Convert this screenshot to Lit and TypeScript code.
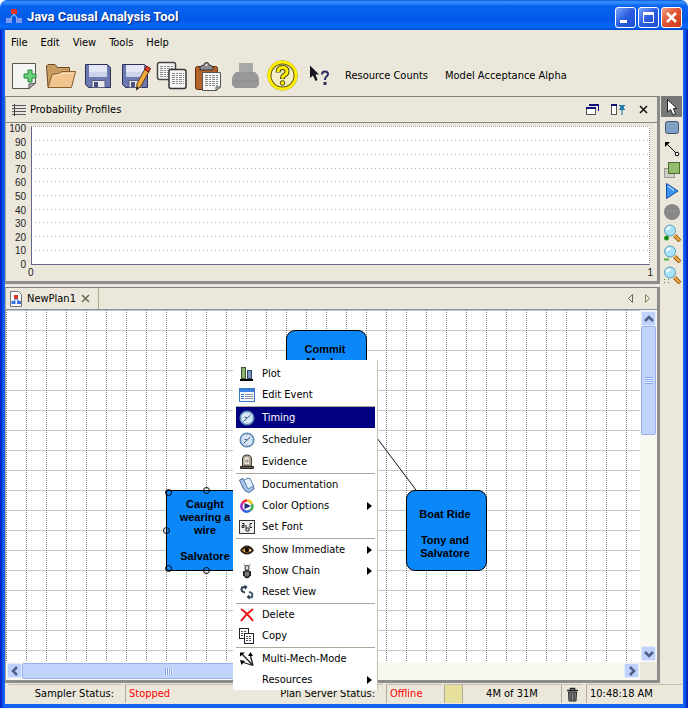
import { LitElement, html, svg, css, nothing, SVGTemplateResult } from "lit";
import { customElement } from "lit/decorators.js";
import { classMap } from "lit/directives/class-map.js";
import { styleMap } from "lit/directives/style-map.js";

const icon = (w: number, h: number, body: SVGTemplateResult) =>
  html`<svg width=${w} height=${h} viewBox="0 0 ${w} ${h}" aria-hidden="true">${body}</svg>`;

const floppy = svg`
  <path d="M3.5 4.5 H25.5 L28.5 7.5 V27.5 H6.5 L3.5 24.5Z" fill="#6c78b0" stroke="#2c3258"/>
  <path d="M7 5 H25 V17 H7Z" fill="#e4e8f6"/>
  <path d="M7 12 H25 V17 H7Z" fill="#cdd3ea"/>
  <path d="M10 20.500 H23 V27.500 H10Z" fill="#e8e8ec" stroke="#5a5f80"/>
  <rect x="12" y="22" width="4" height="5" fill="#49527f"/>`;

const textLines = (x: number, y: number, w: number, n: number) =>
  Array.from({ length: n }, (_, i) => svg`<path d="M${x} ${y + i * 2 + 0.5} h${w}" stroke="#8a8a8a" stroke-dasharray="3 1 2 1"/>`);

const tools: { label: string; body: SVGTemplateResult }[] = [
  { label: "New", body: svg`
    <path d="M4.500 3.500 H27.500 V23 L21 28.500 H4.500Z" fill="#f4f4f2" stroke="#555"/>
    <path d="M27.500 23 L21 28.500 V24Z" fill="#bbb" stroke="#555"/>
    <path d="M20 10 h4 v4 h4 v4 h-4 v4 h-4 v-4 h-4 v-4 h4Z" fill="#6cd07a" stroke="#1f8a35"/>` },
  { label: "Open", body: svg`
    <path d="M3 27 L1.500 6 L3 4.500 H10 L12.500 7.500 H24.500 V13" fill="#c99c62" stroke="#6e4a22"/>
    <path d="M3 27.500 L7 14.500 L14 13.500 L17 11.500 H30.500 L26.500 27.500Z" fill="#f2c58e" stroke="#8a5f30"/>
    <path d="M8 16 L17.500 13.500 H29" fill="none" stroke="#fbe4c2"/>` },
  { label: "Save", body: floppy },
  { label: "Save As", body: svg`${floppy}
    <path d="M27 7 L31 9.500 L22 26 L17.500 30 L18 23.500Z" fill="#f0a840" stroke="#5a3c10"/>
    <path d="M27.500 6 L31.500 8.500 L29.500 12 L25.500 9.500Z" fill="#d84030" stroke="#7a1c10"/>
    <path d="M17.500 30 L18 26.500 L20 28Z" fill="#222"/>` },
  { label: "Copy", body: svg`
    <rect x="1.500" y="2.500" width="18" height="17" rx="2" fill="#f6f6f4" stroke="#444" stroke-width="1.500"/>
    ${textLines(4, 6, 13, 6)}
    <rect x="13" y="9.500" width="17" height="19" rx="2" fill="#f6f6f4" stroke="#333" stroke-width="1.500"/>
    ${textLines(16, 13, 12, 6)}` },
  { label: "Paste", body: svg`
    <rect x="2.500" y="6.500" width="22" height="23" rx="2" fill="#b4642a" stroke="#5c2c0c"/>
    <path d="M7 10 V7 Q9 5 11 5 Q11 2.500 13.500 2.500 Q16 2.500 16 5 Q18 5 20 7 V10Z" fill="#8c8c90" stroke="#333"/>
    <circle cx="13.500" cy="5" r="1" fill="#eee"/>
    <path d="M9.500 12.500 H27.500 V27 L23 30.500 H9.500Z" fill="#f8f8f6" stroke="#555"/>
    ${textLines(12, 15, 13, 6)}
    <path d="M27.500 27 L23 30.500 V27Z" fill="#ccc" stroke="#555"/>` },
  { label: "Print", body: svg`
    <path d="M9 3 H23 V13 H9Z" fill="#a8a8a8"/>
    <path d="M6 12 H25 Q29 15 29 20 V25 L26 28 H5 L2 25 V20 Q2 15 6 12Z" fill="#989898"/>
    <path d="M3 21 H28" stroke="#8a8a8a"/>` },
  { label: "Help", body: svg`
    <circle cx="15.500" cy="15.500" r="13" fill="#f4efc4" stroke="#5f5a10" stroke-width="4"/>
    <circle cx="15.500" cy="15.500" r="13.500" fill="none" stroke="#ffee00" stroke-width="3"/>
    <path d="M11 12.500 Q11 7.500 15.500 7.500 Q20 7.500 20 11.500 Q20 14 17.500 15 Q15.500 16 15.500 19" fill="none" stroke="#4a4708" stroke-width="5"/>
    <path d="M11 12 Q11 7.500 15.500 7.500 Q20 7.500 20 11.500 Q20 14 17.500 15 Q15.500 16 15.500 18.500" fill="none" stroke="#ffee00" stroke-width="3"/>
    <circle cx="15.500" cy="23" r="2.300" fill="#ffee00" stroke="#4a4708"/>` },
  { label: "What's This?", body: svg`
    <path d="M6 5.500 V18 L9 15.500 L11.500 21 L13.500 20 L11.500 14.500 H15Z" fill="#151520"/>
    <path d="M18 14.500 Q18 11.500 21 11.500 Q24 11.500 24 14 Q24 15.500 22.500 16.500 Q21 17.500 21 20" fill="none" stroke="#2c2c60" stroke-width="2"/>
    <rect x="19.500" y="22" width="3" height="3" fill="#2c2c60"/>` },
];

const magnifier = (mark: SVGTemplateResult) => svg`
  <path d="M11.500 11.500 L17 17" stroke="#9a5c14" stroke-width="4"/>
  <path d="M11.500 11.500 L16.500 16.500" stroke="#f0ae48" stroke-width="2"/>
  <circle cx="7" cy="6.500" r="5.500" fill="#a8e2f6" stroke="#5c9cc0"/>
  <path d="M4 6 Q4.500 3.500 7.500 3.500" fill="none" stroke="#fff" stroke-width="2"/>${mark}`;

const palette: { label: string; selected?: boolean; body: SVGTemplateResult }[] = [
  { label: "Select", selected: true, body: svg`<path d="M4.500 1.500 V14 L7.500 11.500 L10 17 L12.500 16 L10.500 10.500 H14Z" fill="#fff" stroke="#222"/>` },
  { label: "Event", body: svg`<rect x="2.500" y="2.500" width="13" height="12" rx="2" fill="#7f9fc4" stroke="#42566e"/>` },
  { label: "Mechanism", body: svg`<path d="M3 3 L13 13" stroke="#000"/><path d="M2 2 H7 L2 7Z"/><circle cx="14" cy="14" r="1.800" fill="#fff" stroke="#000"/>` },
  { label: "Group", body: svg`<rect x="1.500" y="7.500" width="10" height="9" fill="#cfcfc6" stroke="#9a9a92"/><rect x="5.500" y="1.500" width="11" height="11" fill="#93bc6c" stroke="#4d6c34"/>` },
  { label: "Run", body: svg`<path d="M3.500 1.500 L15 9 L3.500 16.500Z" fill="#3c94f4" stroke="#104ca8"/><path d="M5 4 L11 8.500" stroke="#a8d4ff" stroke-width="1.500"/>` },
  { label: "Stop", body: svg`<circle cx="9" cy="9" r="8" fill="#888"/><path d="M4 8 H13" stroke="#999" stroke-width="2" stroke-dasharray="1 1"/>` },
  { label: "Zoom In", body: magnifier(svg`<circle cx="3.500" cy="14" r="2.500" fill="#28a028"/><path d="M2 14 h3 M3.500 12.500 v3" stroke="#107010"/>`) },
  { label: "Zoom Out", body: magnifier(svg`<path d="M1 14.500 h5" stroke="#50b840" stroke-width="2"/>`) },
  { label: "Zoom to Fit", body: magnifier(svg`<path d="M1 13.500 h5 M1 16.500 h5" stroke="#30a030" stroke-dasharray="1 3"/>`) },
];

const clock = svg`
  <circle cx="8" cy="8" r="6.800" fill="#d8e8f8" stroke="#5a86b4" stroke-width="1.500"/>
  <path d="M4.500 11.500 L11.500 5 M8 8 L5.500 7" stroke="#33506c"/>
  <path d="M8 2.500 v1 M8 12.500 v1 M2.500 8 h1 M12.500 8 h1" stroke="#6c8cac"/>`;

interface MenuEntry { label: string; sub?: boolean; active?: boolean; body?: SVGTemplateResult }

const menuGroups: MenuEntry[][] = [
  [
    { label: "Plot", body: svg`<rect x="2.500" y="1.500" width="4" height="11" fill="#8cb070" stroke="#3c5830"/><rect x="8.500" y="4.500" width="4" height="8" fill="#7898c0" stroke="#304868"/><path d="M1 14 H14" stroke="#000" stroke-width="2"/>` },
    { label: "Edit Event", body: svg`<rect x="0.500" y="1.500" width="15" height="13" fill="#f4f8fc" stroke="#3c78c0"/><rect x="1" y="2" width="14" height="3" fill="#3c80e0"/><path d="M2 7.500 h3 M2 9.500 h3 M2 11.500 h3" stroke="#3c78c0"/><path d="M6 7.500 h8 M6 9.500 h8 M6 11.500 h8" stroke="#8c98a4"/>` },
  ],
  [
    { label: "Timing", active: true, body: clock },
    { label: "Scheduler", body: clock },
    { label: "Evidence", body: svg`<path d="M3.500 12 V5 Q3.500 1 8 1 Q12.500 1 12.500 5 V12Z" fill="#b0a898" stroke="#403830"/><path d="M5.500 10 V5.500 Q5.500 3 8 3 Q10 3 10 5.500 V10Z" fill="#ece8dc"/><path d="M6 7 h4 M8 5 v4" stroke="#94887c"/><path d="M1.500 12.500 H14.500 V14.500 H1.500Z" fill="#686058" stroke="#302820"/>` },
  ],
  [
    { label: "Documentation", body: svg`<path d="M0.500 3 L4 1.500 L8 9 L14.500 8 L15 12 L10 15.500 Q6 15 4 11Z" fill="#a8c4e8" stroke="#4868a0"/><path d="M5 3.500 Q8 0.500 11 1.500 L14.500 9 L9 12Z" fill="#e8f0fa" stroke="#6080b0"/>` },
    { label: "Color Options", sub: true, body: svg`<path d="M8 2.500 A5.500 5.500 0 0 1 13 6" fill="none" stroke="#f0c020" stroke-width="2.500"/><path d="M13 6 A5.500 5.500 0 0 1 11 12.500" fill="none" stroke="#40b050" stroke-width="2.500"/><path d="M11 12.500 A5.500 5.500 0 0 1 4 12" fill="none" stroke="#3060e0" stroke-width="2.500"/><path d="M4 12 A5.500 5.500 0 0 1 3.500 5" fill="none" stroke="#a030d0" stroke-width="2.500"/><path d="M3.500 5 A5.500 5.500 0 0 1 8 2.500" fill="none" stroke="#e83040" stroke-width="2.500"/><path d="M5.500 5 L12 8 L5.500 11Z" fill="#202878"/>` },
    { label: "Set Font", body: svg`<rect x="0.500" y="1.500" width="15" height="13" fill="#f0f0f0" stroke="#333"/><path d="M3 4.500 h2 v4 h-2 v-2 h2 M7 6 v6 h3 v-3 h-3 M13 4.500 h-2 v4 h2" fill="none" stroke="#222"/>` },
  ],
  [
    { label: "Show Immediate", sub: true, body: svg`<path d="M1 8.500 Q4 3.500 8 3.500 Q12 3.500 15 8.500 Q12 12.500 8 12.500 Q4 12.500 1 8.500Z" fill="#2c2018"/><path d="M3 8.500 Q8 3.500 13 8.500 Q8 12.500 3 8.500Z" fill="#e8a838"/><circle cx="8" cy="8" r="2.200" fill="#140c08"/><path d="M10 8 h2" stroke="#fff"/>` },
    { label: "Show Chain", sub: true, body: svg`<path d="M5 1.500 L7.500 4.500 M11 1.500 L8.500 4.500" stroke="#333"/><ellipse cx="8" cy="5" rx="2" ry="2.500" fill="#ddd" stroke="#333"/><ellipse cx="8" cy="11" rx="2.500" ry="3.500" fill="#ccc" stroke="#222" stroke-width="1.500"/><path d="M8 7 V14 M4.500 8 V13 M11.500 8 V13" stroke="#222"/>` },
    { label: "Reset View", body: svg`<path d="M6 8.500 Q1 7.500 3 3.500 L7 3" fill="none" stroke="#2c3c50" stroke-width="2"/><path d="M5.500 0.500 L8.500 3 L6 6Z" fill="#2c3c50"/><path d="M10 8 Q14.500 8.500 13 13 L10 13.500" fill="none" stroke="#44586c" stroke-width="2"/><path d="M10.500 10.500 L7.500 13 L10.500 15.500Z" fill="#2c3c50"/>` },
  ],
  [
    { label: "Delete", body: svg`<path d="M2 2 Q8 6 14 14 M14 2 Q7 7 2 14" fill="none" stroke="#e81010" stroke-width="2"/>` },
    { label: "Copy", body: svg`<rect x="0.500" y="0.500" width="9" height="10" fill="#fff" stroke="#222"/><path d="M2 3.500 h6 M2 5.500 h3 M2 7.500 h3" stroke="#555" stroke-dasharray="2 1"/><rect x="5.500" y="5.500" width="9" height="10" fill="#fff" stroke="#222"/><path d="M7 8.500 h6 M7 10.500 h6 M7 12.500 h6" stroke="#555" stroke-dasharray="2 1"/>` },
  ],
  [
    { label: "Multi-Mech-Mode", body: svg`<path d="M14 14.500 L3 3 M14 14.500 L11 3 M14 14.500 L3 11" stroke="#222" stroke-width="1.300"/><path d="M1 1.500 h5 l-5 4Z M9 5 l2.500 -4 l2.500 4Z M1 9 l5 1 l-3.500 4Z"/>` },
    { label: "Resources", sub: true },
  ],
];

const planGlyph = svg`
  <path d="M8 6 L4 11 M8 6 L12 11" stroke="#c8d4f0"/>
  <rect x="5" y="1" width="6" height="5" fill="#e03428"/>
  <rect x="0" y="10" width="6" height="5" fill="#7c9cf0"/>
  <rect x="10" y="10" width="6" height="5" fill="#7c9cf0"/>`;

const chevrons = {
  up: svg`<path d="M3 9 L7 5 L11 9" />`,
  down: svg`<path d="M3 5 L7 9 L11 5" />`,
  left: svg`<path d="M9 3 L5 7 L9 11" />`,
  right: svg`<path d="M5 3 L9 7 L5 11" />`,
};

const base = css`
  :host { box-sizing: border-box; }
  *, *::before, *::after { box-sizing: border-box; }
  button {
    font: inherit; color: inherit; background: none; border: 0; margin: 0; padding: 0;
    display: flex; align-items: center;
  }
  svg { display: block; flex: none; }
`;

@customElement("probability-chart")
export class ProbabilityChart extends LitElement {
  static styles = [base, css`
    :host {
      display: grid; grid-template-columns: 20px 1fr; column-gap: 5px;
      padding: 0 7px 2px 0; font: 10px/12px "Liberation Sans", Arial, sans-serif; color: #222;
    }
    .scale { display: flex; flex-direction: column; justify-content: space-between; height: 148px; text-align: right; }
    .plot { height: 139px; margin-top: 3px; background: #fff; border-left: 1px solid #66668c; border-bottom: 1px solid #66668c; border-right: 1px dotted #999; border-top: 1px dotted #aaa; }
    .plot svg { width: 100%; height: 100%; }
    .range { grid-column: 2; display: flex; justify-content: space-between; margin: -4px -3px 0; }
  `];
  render() {
    const values = [100, 90, 80, 70, 60, 50, 40, 30, 20, 10, 0];
    return html`
      <div class="scale">${values.map((v) => html`<span>${v}</span>`)}</div>
      <div class="plot"><svg>${values.slice(1, 10).map((v) => svg`
        <line x1="3" x2="100%" y1="${v}%" y2="${v}%" stroke="#b4b4b4" stroke-dasharray="1 3" shape-rendering="crispEdges"/>`)}</svg></div>
      <div class="range"><span>0</span><span>1</span></div>`;
  }
}

@customElement("scroll-bar")
export class ScrollBar extends LitElement {
  static properties = { vertical: { type: Boolean, reflect: true } };
  declare vertical: boolean;
  static styles = [base, css`
    :host { display: flex; background: #f8f7f0; padding: 1px; }
    :host([vertical]) { flex-direction: column; }
    .end { width: 15px; height: 15px; flex: none; background: #c0d0fc; border: 1px solid #e4ecff; border-radius: 2px; justify-content: center; }
    .end path { fill: none; stroke: #4d6185; stroke-width: 2.5; }
    .track { flex: 1; display: flex; }
    :host([vertical]) .track { flex-direction: column; }
    .thumb { width: 49%; background: #c2d3fc; border: 1px solid #98b0f0; border-radius: 2px; display: flex; align-items: center; justify-content: center; }
    :host([vertical]) .thumb { width: auto; height: 34%; }
    .grip { width: 8px; height: 7px; background: repeating-linear-gradient(90deg, #86a4ee 0 1px, #eef4ff 1px 2px); }
    :host([vertical]) .grip { background: repeating-linear-gradient(#86a4ee 0 1px, #eef4ff 1px 2px); }
  `];
  render() {
    const v = this.vertical;
    return html`
      <button class="end" aria-label=${v ? "Scroll up" : "Scroll left"}>${icon(14, 14, v ? chevrons.up : chevrons.left)}</button>
      <div class="track"><div class="thumb"><div class="grip"></div></div></div>
      <button class="end" aria-label=${v ? "Scroll down" : "Scroll right"}>${icon(14, 14, v ? chevrons.down : chevrons.right)}</button>`;
  }
}

const planNodes = [
  { x: 280, y: 20, name: ["Commit", "Murder"], actors: ["Tony"] },
  { x: 160, y: 180, name: ["Caught", "wearing a", "wire"], actors: ["Salvatore"], picked: true },
  { x: 400, y: 180, name: ["Boat Ride"], actors: ["Tony and", "Salvatore"] },
];

@customElement("plan-canvas")
export class PlanCanvas extends LitElement {
  static styles = [base, css`
    :host { display: block; position: relative; overflow: hidden; background: #fff; font: bold 11px/13px "Liberation Sans", Arial, sans-serif; }
    .grid { position: absolute; inset: 0; width: 100%; height: 100%; }
    .node {
      position: absolute; width: 81px; height: 81px; border: 1px solid #000; border-radius: 9px; background: #0a88fa;
      display: flex; flex-direction: column; align-items: center; gap: 13px; text-align: center; padding-right: 3px;
    }
    .picked { border-radius: 2px; }
    .line { display: block; white-space: nowrap; }
  `];
  render() {
    const handles = [[162, 182], [200, 180], [160, 220], [162, 258], [200, 260]];
    const lines = (list: string[]) => html`<div>${list.map((t) => html`<span class="line">${t}</span>`)}</div>`;
    return html`
      <svg class="grid">
        <defs><pattern id="cells" width="20" height="20" patternUnits="userSpaceOnUse">
          <path d="M0 0.500 H20" stroke="#c6c6c6"/><path d="M0.500 0 V20" stroke="#808080" stroke-dasharray="1 1"/>
        </pattern></defs>
        <rect width="100%" height="100%" fill="url(#cells)"/>
        <path d="M320 60 L440 220 M320 60 L200 220" stroke="#111"/>
      </svg>
      ${planNodes.map((n) => html`
        <div class=${classMap({ node: true, picked: !!n.picked })}
          style=${styleMap({ left: `${n.x}px`, top: `${n.y}px`, paddingTop: `${22 - 5 * n.name.length}px` })}>
          ${lines(n.name)}${lines(n.actors)}
        </div>`)}
      <svg class="grid">${handles.map(([x, y]) => svg`<circle cx=${x + 0.5} cy=${y + 0.5} r="3" fill="none" stroke="#000"/>`)}</svg>`;
  }
}

@customElement("context-menu")
export class ContextMenu extends LitElement {
  static styles = [base, css`
    :host { display: block; background: #fff; padding: 3px 2px 0 3px; border-right: 1px solid #c4c0b0; }
    .group { display: flex; flex-direction: column; }
    .group + .group { border-top: 1px solid #aca899; margin-top: 1px; }
    .group:nth-child(2) { gap: 1px; }
    .item { width: 100%; height: 21px; padding: 0 3px; gap: 7px; }
    .slot { width: 16px; flex: none; }
    .label { flex: 1; text-align: left; }
    .active { background: #000080; color: #fff; }
    .arrow { width: 0; border: 4px solid transparent; border-left: 5px solid #000; border-right: 0; }
  `];
  render() {
    return html`<div role="menu">${menuGroups.map((g) => html`<div class="group" role="group">${g.map((e) => html`
      <button role="menuitem" class=${classMap({ item: true, active: !!e.active })}>
        <span class="slot">${e.body ? icon(16, 16, e.body) : nothing}</span>
        <span class="label">${e.label}</span>
        ${e.sub ? html`<span class="arrow"></span>` : nothing}
      </button>`)}</div>`)}</div>`;
  }
}

@customElement("app-root")
export class AppRoot extends LitElement {
  static styles = [base, css`
    :host {
      display: flex; flex-direction: column; position: relative; min-height: 100vh;
      font: 11px/14px "DejaVu Sans Condensed", Tahoma, sans-serif; color: #000; background: #fff;
    }
    .title {
      height: 30px; display: flex; align-items: center; padding: 4px 6px 0; gap: 5px; border-radius: 7px 7px 0 0;
      background: linear-gradient(#0a5ae0, #3a94ff 2px, #0864f0 6px, #0458e8 20px, #0668ff 27px, #0048c8);
      color: #fff; text-shadow: 1px 1px 1px #0a2a80;
    }
    .title h1 { flex: 1; margin: 0; font: bold 13px/18px Roboto, "Trebuchet MS", sans-serif; }
    .controls { display: flex; gap: 2px; }
    .control { width: 21px; height: 21px; border: 1px solid #fff; border-radius: 3px; justify-content: center; background: linear-gradient(135deg, #7ca4f8, #2a5ce0 50%, #2050d0); }
    .close { background: linear-gradient(135deg, #f0a080, #e05030 50%, #c83c18); }
    .body { flex: 1; display: flex; flex-direction: column; background: #ebe8db; border: solid #0a50e0; border-width: 0 5px 4px; border-image: linear-gradient(90deg, #0018c8, #1464f4 4px, #1464f4 calc(100% - 4px), #0018b8) 0 5 4; }
    .menubar { display: flex; padding: 6px 6px 5px; gap: 13px; }
    .toolbar { display: flex; align-items: center; height: 41px; padding-top: 1px; }
    .tool { width: 37px; height: 32px; justify-content: center; }
    .text-tool { margin-left: 7px; margin-right: 10px; }
    .main { flex: 1; display: flex; }
    .panels { flex: 1; display: flex; flex-direction: column; gap: 3px; min-width: 0; }
    .panel { border: 1px solid #808080; border-right: 3px solid #8c8c8c; border-bottom: 3px solid #8c8c8c; border-left-color: #a8a8a0; }
    .panel-head { display: flex; align-items: center; gap: 4px; height: 26px; padding: 0 7px 0 6px; border-bottom: 1px solid #888; }
    .panel-head h2 { flex: 1; margin: 0; font: inherit; }
    .head-tools { display: flex; gap: 12px; }
    .plan { flex: 1; display: grid; grid-template: 22px 1fr 18px / 1fr 17px; }
    .tabs { grid-column: 1 / 3; display: flex; justify-content: space-between; border-bottom: 1px solid #7c98a8; }
    .tab { gap: 4px; padding: 0 8px 0 3px; border-right: 1px solid #b0aa88; }
    .tab svg:last-child { margin-left: 1px; }
    .tab-nav { display: flex; gap: 8px; padding-right: 5px; }
    .palette { width: 23px; display: flex; flex-direction: column; padding: 0 1px; }
    .pick { width: 21px; height: 21px; justify-content: center; }
    .selected { background: #787878; }
    .status { height: 21px; display: grid; grid-template-columns: 117px 118px 143px 59px 20px 99px 22px 1fr; padding: 1px 1px 1px 0; }
    .cell { display: flex; align-items: center; border-left: 1px solid #b0ac9c; border-top: 1px solid #c4c0b0; padding-left: 3px; margin-left: 3px; }
    .label-cell { justify-content: flex-end; padding-right: 8px; }
    .label-cell, .first { border-left-color: transparent; }
    .red { color: #f00; }
    .memory { background: #e6e09c; margin-left: 2px; }
    .center { justify-content: center; padding: 0; margin: 0; }
    .popup { position: absolute; left: 233px; top: 360px; width: 145px; height: 330px; }
  `];
  render() {
    return html`
      <header class="title">
        ${icon(16, 18, planGlyph)}
        <h1>Java Causal Analysis Tool</h1>
        <div class="controls">
          <button class="control" aria-label="Minimize">${icon(19, 19, svg`<path d="M4 13.500 h7" stroke="#fff" stroke-width="3"/>`)}</button>
          <button class="control" aria-label="Maximize">${icon(19, 19, svg`<path d="M4 5.500 H15 M4.500 5 V14.500 H14.500 V5" fill="none" stroke="#fff"/><path d="M4 5.500 H15" stroke="#fff" stroke-width="3"/>`)}</button>
          <button class="control close" aria-label="Close">${icon(19, 19, svg`<path d="M5 5 L14 14 M14 5 L5 14" stroke="#fff" stroke-width="2.500"/>`)}</button>
        </div>
      </header>
      <div class="body">
        <nav class="menubar">${["File", "Edit", "View", "Tools", "Help"].map((m) => html`<button>${m}</button>`)}</nav>
        <div class="toolbar">
          ${tools.map((t) => html`<button class="tool" aria-label=${t.label}>${icon(32, 32, t.body)}</button>`)}
          <button class="text-tool">Resource Counts</button>
          <button class="text-tool">Model Acceptance Alpha</button>
        </div>
        <div class="main">
          <div class="panels">
            <section class="panel">
              <div class="panel-head">
                ${icon(14, 14, svg`<path d="M2.500 1 V13" stroke="#333"/><path d="M0 2.500 H14 M0 5.500 H14 M0 8.500 H14 M0 11.500 H14" stroke="#556"/>`)}
                <h2>Probability Profiles</h2>
                <div class="head-tools">
                  <button aria-label="Restore">${icon(13, 13, svg`<path d="M3 1.500 H12.500 V8" fill="none" stroke="#10107c" stroke-width="1"/><path d="M3 2 H13" stroke="#10107c" stroke-width="2"/><rect x="0.500" y="5" width="9" height="6.500" fill="#fff" stroke="#555"/><path d="M0 5 H10" stroke="#10107c" stroke-width="2"/>`)}</button>
                  <button aria-label="Pin">${icon(14, 13, svg`<rect x="0.500" y="1.500" width="5" height="10" fill="#fff" stroke="#555"/><path d="M0 2 H6" stroke="#10107c" stroke-width="2"/><path d="M8 2.500 h6 M8 6.500 h6 M11 7 v5" stroke="#186090"/><rect x="9" y="2" width="4" height="5" fill="#2880a8"/>`)}</button>
                  <button aria-label="Close panel">${icon(13, 13, svg`<path d="M3 3 L10 10 M10 3 L3 10" stroke="#111" stroke-width="1.500"/>`)}</button>
                </div>
              </div>
              <probability-chart></probability-chart>
            </section>
            <section class="panel plan">
              <div class="tabs">
                <button class="tab">
                  ${icon(14, 16, svg`<path d="M1.500 0.500 H9.500 L12.500 3.500 V15.500 H1.500Z" fill="#fafafa" stroke="#777"/><rect x="5" y="4" width="4" height="4" fill="#e03428"/><rect x="2.500" y="10" width="4" height="3" fill="#3c70e0"/><rect x="8" y="10" width="4" height="3" fill="#3c70e0"/><path d="M7 8 L4.500 10 M7 8 L10 10" stroke="#3c70e0"/>`)}
                  NewPlan1
                  ${icon(9, 9, svg`<path d="M1 1 L8 8 M8 1 L1 8" stroke="#6c6a50" stroke-width="1.500"/>`)}
                </button>
                <div class="tab-nav">
                  <button aria-label="Previous tab">${icon(9, 9, svg`<path d="M6.500 0.500 L2.500 4.500 L6.500 8.500Z" fill="none" stroke="#666"/>`)}</button>
                  <button aria-label="Next tab">${icon(9, 9, svg`<path d="M2.500 0.500 L6.500 4.500 L2.500 8.500Z" fill="none" stroke="#86844c"/>`)}</button>
                </div>
              </div>
              <plan-canvas></plan-canvas>
              <scroll-bar vertical></scroll-bar>
              <scroll-bar></scroll-bar>
            </section>
          </div>
          <div class="palette">${palette.map((p) => html`
            <button class=${classMap({ pick: true, selected: !!p.selected })} aria-label=${p.label}>${icon(18, 18, p.body)}</button>`)}</div>
        </div>
        <footer class="status">
          <div class="cell label-cell first">Sampler Status:</div>
          <div class="cell red">Stopped</div>
          <div class="cell label-cell">Plan Server Status:</div>
          <div class="cell red">Offline</div>
          <div class="cell memory"></div>
          <div class="cell center">4M of 31M</div>
          <div class="cell center">${icon(13, 15, svg`<path d="M1 3.500 H12 M4.500 3 V1.500 H8.500 V3" fill="none" stroke="#222" stroke-width="1.500"/><path d="M2.500 5 H10.500 L10 14 H3Z" fill="#888" stroke="#222"/><path d="M5 6 V13 M8 6 V13" stroke="#222"/>`)}</div>
          <div class="cell">10:48:18 AM</div>
        </footer>
      </div>
      <context-menu class="popup"></context-menu>`;
  }
}
